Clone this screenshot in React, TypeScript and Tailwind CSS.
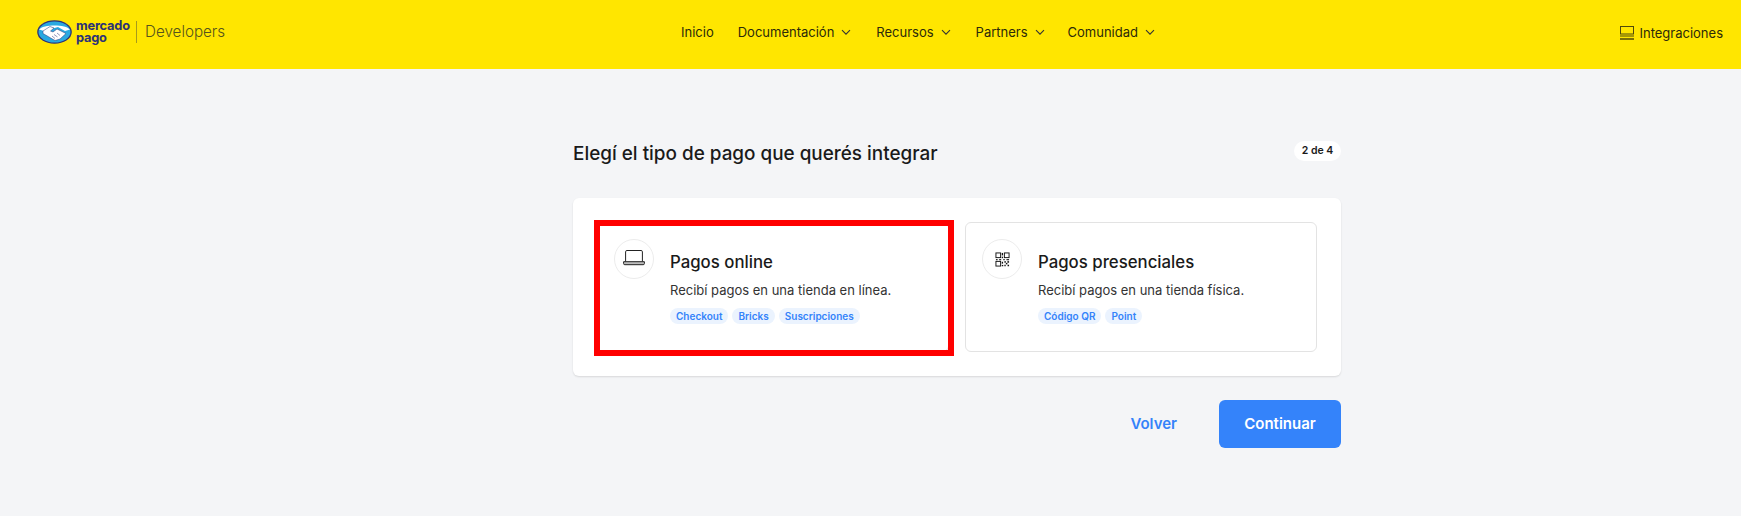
import React from "react";

function Chevron() {
  return (
    <svg width="10" height="7" viewBox="0 0 10 7" fill="none" className="ml-[7px] mt-[1px]">
      <path d="M1 1.2 5 5.2 9 1.2" stroke="#333" strokeWidth="1.1" />
    </svg>
  );
}

function NavItem({ label, arrow = true, cls }: { label: string; arrow?: boolean; cls: string }) {
  return (
    <span className={`flex items-center ${cls}`}>
      <span className="text-[13px] leading-[18px] text-[#2c2a0a]">{label}</span>
      {arrow && <Chevron />}
    </span>
  );
}

function Logo() {
  return (
    <svg width="35" height="24" viewBox="0 0 35 24">
      <ellipse cx="17.5" cy="12" rx="17.3" ry="11.8" fill="#2d3277" />
      <ellipse cx="17.5" cy="12" rx="16" ry="10.6" fill="#2aa9e0" />
      <path d="M2 9.5 C6 4 29 4 33 9.5 L28 11 L21 7 L17.5 8 L13 7 L7 11 Z" fill="#fff" />
      <path d="M6 11 L13 6.5 L17 8 L13.5 11 L16 12 L20 9 L29 13.5 L23 19 L18 20.5 L12 17 L6 13.5 Z" fill="#fff" stroke="#2d3277" strokeWidth="0.5" />
      <path d="M15 16 l3 2.5 M17 14.5 l3.5 2.5 M20 13 l3 2.5" stroke="#2d3277" strokeWidth="0.5" fill="none" />
    </svg>
  );
}

function Laptop() {
  return (
    <svg width="22" height="16" viewBox="0 0 22 16" fill="none" className="-mt-[2px]">
      <path d="M2.6 11.5V1.8A1.3 1.3 0 0 1 3.9.5h14.2a1.3 1.3 0 0 1 1.3 1.3v9.7" stroke="#222" strokeWidth="1" />
      <path d="M.6 11.7h20.8v1.8a1.2 1.2 0 0 1-1.2 1.2H1.8a1.2 1.2 0 0 1-1.2-1.2z" fill="#bdbdbd" stroke="#222" strokeWidth="1" />
    </svg>
  );
}

function Qr() {
  return (
    <svg width="15" height="15" viewBox="0 0 16 16" fill="none">
      <g stroke="#111" strokeWidth="1">
        <rect x="1" y="1" width="5" height="5" />
        <rect x="10" y="1" width="5" height="5" />
        <rect x="1" y="10" width="5" height="5" />
      </g>
      <g fill="#111">
        <rect x="7.2" y="1" width="1.4" height="2.6" />
        <rect x="7.2" y="5" width="1.4" height="1.6" />
        <rect x="1" y="7.6" width="1.8" height="1.2" />
        <rect x="4.4" y="7.6" width="2.2" height="1.2" />
        <rect x="8.8" y="7.6" width="1.6" height="1.2" />
        <rect x="12.2" y="7.6" width="2.8" height="1.2" />
        <rect x="7.2" y="10.4" width="1.4" height="2" />
        <rect x="10" y="9.8" width="1.6" height="1.6" />
        <rect x="13.2" y="9.8" width="1.8" height="1.6" />
        <rect x="11.6" y="11.6" width="1.6" height="1.6" />
        <rect x="7.2" y="13.8" width="1.6" height="1.4" />
        <rect x="10" y="13.6" width="1.4" height="1.6" />
        <rect x="13.4" y="13.6" width="1.6" height="1.6" />
      </g>
    </svg>
  );
}

function Tag({ children }: { children: React.ReactNode }) {
  return (
    <span className="h-4 px-[6px] rounded-full bg-[#ebf3fe] text-[#3483fa] text-[10px] leading-4 font-semibold whitespace-nowrap">
      {children}
    </span>
  );
}

function Option({
  icon,
  title,
  desc,
  tags,
  marked,
}: {
  icon: React.ReactNode;
  title: string;
  desc: string;
  tags: string[];
  marked?: boolean;
}) {
  return (
    <div className="relative h-[130px] rounded-md border border-[#e3e3e3] bg-white p-4 flex gap-4">
      <div className="w-10 h-10 shrink-0 rounded-full border border-[#ececec] flex items-center justify-center">{icon}</div>
      <div className="flex flex-col pt-[12px]">
        <div className="text-[16.8px] leading-[22px] font-medium text-[#1a1a1a] whitespace-nowrap">{title}</div>
        <div className="mt-[8px] text-[13px] leading-[18px] text-[#333] whitespace-nowrap">{desc}</div>
        <div className="mt-[9px] flex gap-1">
          {tags.map((t) => (
            <Tag key={t}>{t}</Tag>
          ))}
        </div>
      </div>
      {marked && <div className="absolute -left-[4px] -right-[6px] -top-[3px] -bottom-[5px] border-[6px] border-[#ff0000]" />}
    </div>
  );
}

export default function App() {
  return (
    <div className="min-h-[516px] bg-[#f4f5f7] flex flex-col" style={{ fontFamily: "Inter, 'Liberation Sans', sans-serif" }}>
      <header className="h-[69px] bg-[#ffe600] flex items-center pl-[37px] pr-[18px] pb-[6px]">
        <div className="w-[644px] flex items-center">
          <Logo />
          <div className="ml-[4px] text-[12.8px] leading-[12px] font-bold text-[#2d3277] tracking-[-0.2px] w-[58px]">
            mercado
            <br />
            pago
          </div>
          <div className="ml-[2px] w-px h-[22px] bg-[#a79a1c]" />
          <div className="ml-[8px] text-[15.2px] leading-5 font-light text-[#55531c]">Developers</div>
        </div>
        <nav className="flex items-center">
          <NavItem label="Inicio" arrow={false} cls="mr-[24px]" />
          <NavItem label="Documentación" cls="mr-[25px]" />
          <NavItem label="Recursos" cls="mr-[25px]" />
          <NavItem label="Partners" cls="mr-[23px]" />
          <NavItem label="Comunidad" cls="" />
        </nav>
        <div className="ml-auto flex items-center gap-[5px] mt-[3px]">
          <svg width="14" height="14" viewBox="0 0 14 14" fill="none">
            <rect x="0.5" y="0.5" width="13" height="7.5" stroke="#4f4a0a" />
            <path d="M0 10h14" stroke="#4f4a0a" />
            <path d="M0 13h14" stroke="#7a7008" strokeWidth="2" />
          </svg>
          <span className="text-[13px] leading-[18px] text-[#2c2a0a]">Integraciones</span>
        </div>
      </header>

      <main className="flex-1 pl-[173px] flex justify-center">
        <div className="w-[768px] pt-[72px]">
          <div className="flex items-center justify-between h-[20px]">
            <h1 className="text-[18.9px] leading-6 font-medium text-[#1a1a1a] translate-y-[3px]">Elegí el tipo de pago que querés integrar</h1>
            <span className="h-5 w-[47px] rounded-full bg-white text-[10.5px] leading-5 font-semibold text-[#1a1a1a] text-center">2 de 4</span>
          </div>
          <div className="mt-[37px] rounded-md bg-white p-6 shadow-[0_1px_2px_rgba(0,0,0,0.12)] grid grid-cols-2 gap-4">
            <Option icon={<Laptop />} title="Pagos online" desc="Recibí pagos en una tienda en línea." tags={["Checkout", "Bricks", "Suscripciones"]} marked />
            <Option icon={<Qr />} title="Pagos presenciales" desc="Recibí pagos en una tienda física." tags={["Código QR", "Point"]} />
          </div>
          <div className="mt-6 flex items-center justify-end">
            <button className="text-[15px] font-semibold text-[#3483fa] mr-[42px]">Volver</button>
            <button className="w-[122px] h-12 rounded-md bg-[#3483fa] text-white text-[15px] font-semibold">Continuar</button>
          </div>
        </div>
      </main>
    </div>
  );
}
